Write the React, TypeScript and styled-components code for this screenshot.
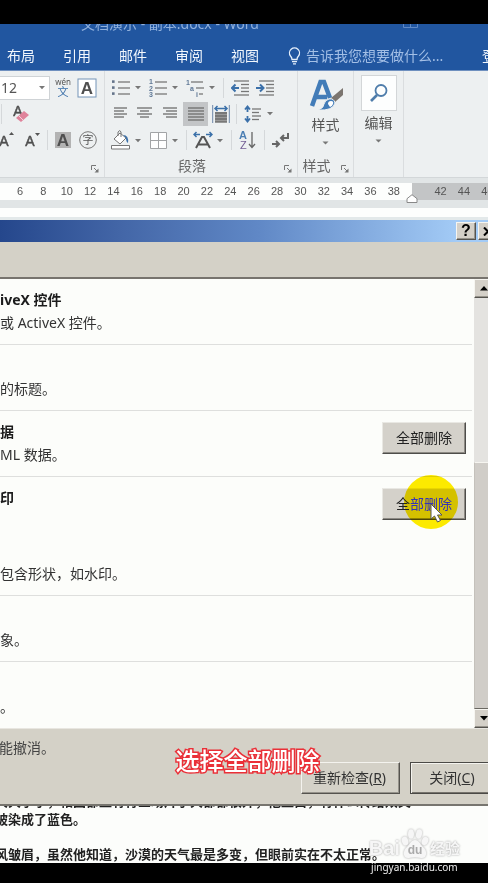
import React from "react";
import styled, { createGlobalStyle } from "styled-components";

const GlobalStyle = createGlobalStyle`
  *, *::before, *::after { box-sizing: border-box; }
  body { margin: 0; background: #000; }
  button, input { font: inherit; margin: 0; }
`;

const ui = `"Noto Sans", "Noto Sans CJK SC", sans-serif`;

const Page = styled.div`
  position: relative;
  display: flex;
  flex-direction: column;
  min-height: 100vh;
  overflow: hidden;
  background: #000;
  font-family: ${ui};
  font-size: 14px;
  color: #333;
`;
const TopBar = styled.div`
  height: 24px;
  background: #000;
`;

/* ---------- Word header ---------- */
const Header = styled.header`
  background: #2156a0;
  height: 46px;
  overflow: hidden;
`;
const TitleStrip = styled.div`
  display: flex;
  justify-content: space-between;
  height: 18px;
  overflow: hidden;
  padding: 0 70px 0 81px;
  color: #91b1dd;
`;
const DocTitle = styled.span`
  line-height: 16px;
  margin-top: -8px;
  white-space: pre;
`;
const Tabs = styled.nav`
  display: flex;
  align-items: center;
  height: 28px;
  padding-left: 7px;
  padding-bottom: 1px;
  white-space: nowrap;
`;
const Tab = styled.button`
  border: 0;
  padding: 0;
  margin-right: 28px;
  background: none;
  color: #f2f7fd;
  line-height: 20px;
  flex: none;
`;
const TellMe = styled.label`
  display: flex;
  align-items: center;
  gap: 5px;
  margin-left: 1px;
  flex: 1;
  min-width: 0;
`;
const TellInput = styled.input`
  flex: 1;
  min-width: 0;
  border: 0;
  padding: 0;
  outline: 0;
  background: none;
  color: #fff;
  line-height: 20px;
  &::placeholder { color: #a3bfe6; opacity: 1; }
`;
const SignIn = styled(Tab)`
  margin-right: -22px;
`;

/* ---------- Ribbon ---------- */
const Ribbon = styled.section`
  display: flex;
  height: 108px;
  background: #edf0f1;
  border-top: 1px solid #6f90bf;
  border-bottom: 1px solid #d3d7d9;
`;
const Group = styled.div<{ $w: number }>`
  display: flex;
  flex-direction: column;
  flex: none;
  width: ${(p) => p.$w}px;
  padding: 4px 0 2px;
  border-right: 1px solid #dadddf;
`;
const Row = styled.div<{ $h: number; $pad?: number }>`
  display: flex;
  align-items: center;
  gap: 4px;
  height: ${(p) => p.$h}px;
  padding-left: ${(p) => p.$pad ?? 7}px;
`;
const Tool = styled.button<{ $w?: number; $lead?: number; $on?: boolean }>`
  display: flex;
  align-items: center;
  justify-content: center;
  flex: none;
  width: ${(p) => p.$w ?? 18}px;
  height: 24px;
  margin-left: ${(p) => p.$lead ?? 0}px;
  padding: 0;
  border: 0;
  background: ${(p) => (p.$on ? "#c3c5c7" : "none")};
  svg { flex: none; }
`;
const Sep = styled.span<{ $lead?: number }>`
  width: 1px;
  height: 20px;
  flex: none;
  margin-left: ${(p) => p.$lead ?? 0}px;
  margin-right: 3px;
  background: #d5d8da;
`;
const SizeBox = styled.div`
  display: flex;
  align-items: center;
  width: 50px;
  height: 24px;
  flex: none;
  background: #fff;
  border: 1px solid #cfd3d6;
  border-left: 0;
`;
const SizeInput = styled.input`
  width: 38px;
  border: 0;
  padding: 0 0 0 1px;
  outline: 0;
  background: none;
  color: #555;
  line-height: 20px;
`;
const GroupLabel = styled.div<{ $shift?: number }>`
  display: flex;
  align-items: center;
  justify-content: center;
  position: relative;
  margin-top: auto;
  height: 18px;
  padding-right: ${(p) => p.$shift ?? 0}px;
  line-height: 18px;
  color: #666;
`;
const Launcher = styled.button<{ $right: number }>`
  position: absolute;
  right: ${(p) => p.$right}px;
  bottom: 2px;
  display: flex;
  padding: 0;
  border: 0;
  background: none;
`;
const BigTool = styled.button`
  display: flex;
  flex-direction: column;
  align-items: center;
  border: 0;
  padding: 0;
  background: none;
  color: #555;
  line-height: 20px;
`;
const BigIcon = styled.span<{ $boxed?: boolean }>`
  display: flex;
  align-items: center;
  justify-content: center;
  width: 36px;
  height: 36px;
  margin-bottom: ${(p) => (p.$boxed ? 2 : 4)}px;
  background: ${(p) => (p.$boxed ? "#fdfefe" : "none")};
  border: ${(p) => (p.$boxed ? "1px solid #d3d6d8" : "0")};
`;
const BigCaret = styled.span`
  display: flex;
  margin-top: 6px;
`;

/* ---------- Ruler ---------- */
const RulerArea = styled.div`
  background: linear-gradient(#e1e5e6 0 30px, #fdfefd 30px 39px, #e3e9ea 39px);
  height: 42px;
  padding-top: 5px;
  overflow: hidden;
`;
const Ruler = styled.div`
  display: grid;
  grid-template-columns: repeat(22, 1fr);
  align-items: center;
  height: 17px;
  margin: 0 -11px 0 -15px;
  background: linear-gradient(to right, #fdfefd 83%, #c3c5c6 83%);
  font: 11px/17px "Liberation Sans", Arial, sans-serif;
  color: #555;
  text-align: center;
`;
const MarkerCell = styled.span`
  display: flex;
  align-self: end;
  margin-bottom: -3px;
`;

/* ---------- Dialog ---------- */
const Dialog = styled.section`
  background: #d4d1c7;
  border-bottom: 2px solid #77756f;
`;
const DialogBar = styled.div`
  display: flex;
  justify-content: flex-end;
  align-items: center;
  gap: 2px;
  height: 22px;
  margin-right: -10px;
  background: linear-gradient(to right, #25478c, #4467a8 25%, #6088c6 52%, #a3cbf6 92%);
`;
const bevel = `
  border: 1px solid;
  border-color: #f6f5f0 #55534e #55534e #f6f5f0;
  box-shadow: inset -1px -1px 0 #96938b;
`;
const BarButton = styled.button`
  display: flex;
  align-items: center;
  justify-content: center;
  width: 20px;
  height: 18px;
  padding: 0;
  background: #d4d0c8;
  ${bevel}
  font: bold 16px/16px "Liberation Sans", Arial, sans-serif;
  color: #000;
`;
const Body = styled.div`
  display: flex;
  margin-top: 35px;
  border-top: 2px solid #77746e;
  border-bottom: 1px solid #e8e6e0;
`;
const List = styled.div`
  flex: 1;
  min-width: 0;
  background: #fcfdfa;
`;
const Item = styled.article<{ $tall?: boolean }>`
  display: flex;
  justify-content: space-between;
  align-items: flex-start;
  min-height: ${(p) => (p.$tall ? 119 : 66)}px;
  margin-right: 2px;
  padding: 10px 6px 10px 0;
  border-bottom: 1px solid #dedfdd;
  &:last-child { border-bottom: 0; }
`;
const ItemText = styled.div`
  display: flex;
  flex-direction: column;
  justify-content: space-between;
  align-self: stretch;
`;
const ItemTitle = styled.h3`
  margin: 0;
  min-height: 22px;
  font-size: 14px;
  line-height: 22px;
  font-weight: 700;
  color: #1c1c1c;
`;
const ItemDesc = styled.p`
  margin: 0;
  line-height: 22px;
  color: #333;
`;
const ActionWrap = styled.div`
  position: relative;
  margin-top: 1px;
`;
const RemoveButton = styled.button`
  display: block;
  width: 84px;
  height: 32px;
  padding: 0;
  background: #d4d1ca;
  border: 1px solid;
  border-color: #e9e8e3 #4e4d4a #4e4d4a #e9e8e3;
  box-shadow: inset -1px -1px 0 #8d8a84;
  color: #222;
  line-height: 28px;
`;
const Label = styled.span`
  position: relative;
  z-index: 1;
`;
const Lit = styled.span`
  color: #3434b8;
`;
const Spot = styled.span`
  position: absolute;
  left: 22px;
  top: -13px;
  width: 54px;
  height: 54px;
  border-radius: 50%;
  background: #ffec00;
  mix-blend-mode: multiply;
  pointer-events: none;
`;
const Pointer = styled.svg`
  position: absolute;
  z-index: 2;
  left: 48px;
  top: 15px;
  pointer-events: none;
`;
const ScrollBar = styled.div`
  display: flex;
  flex-direction: column;
  width: 20px;
  margin-right: -6px;
  flex: none;
  background: #e4e3e0;
`;
const ScrollButton = styled.button`
  display: flex;
  align-items: center;
  justify-content: center;
  height: 19px;
  padding: 0;
  background: #d4d0c8;
  ${bevel}
`;
const Thumb = styled.div`
  flex: 1;
  margin-top: 164px;
  background: #d0cdc8;
  border: 1px solid;
  border-color: #f6f5f0 #6a6862 #6a6862 #c4c1bb;
`;
const Footer = styled.footer`
  position: relative;
  height: 75px;
  padding-top: 8px;
`;
const Note = styled.p`
  margin: 0;
  line-height: 22px;
  color: #444;
  text-indent: -1px;
`;
const FooterActions = styled.div`
  display: flex;
  justify-content: flex-end;
  gap: 10px;
  margin: 3px -8px 0 0;
`;
const FooterButton = styled.button<{ $w: number; $main?: boolean }>`
  width: ${(p) => p.$w}px;
  height: 32px;
  padding: 0 2px 0 0;
  background: #d4d1c7;
  border: 1px solid;
  border-color: ${(p) => (p.$main ? "#4b4a46" : "#f4f3ee #55534e #55534e #f4f3ee")};
  box-shadow: ${(p) =>
    p.$main
      ? "inset 1px 1px 0 #f4f3ee, inset -1px -1px 0 #77746d"
      : "inset -1px -1px 0 #96938b"};
  color: #333;
  line-height: 28px;
`;
const Caption = styled.div`
  position: absolute;
  left: 0;
  right: 0;
  top: 16px;
  padding-left: 7px;
  text-align: center;
  font-size: 24px;
  line-height: 32px;
  font-weight: 500;
  color: #fff;
  -webkit-text-stroke: 3px #ea3038;
  paint-order: stroke fill;
  pointer-events: none;
`;

/* ---------- Document ---------- */
const Doc = styled.div`
  height: 57px;
  overflow: hidden;
  background: #fcfdfb;
  color: #222;
  font-size: 13px;
  font-weight: 700;
`;
const Lines = styled.div`
  margin-top: -14px;
`;
const Line = styled.p<{ $after?: number }>`
  margin: 0 0 ${(p) => p.$after ?? 0}px;
  line-height: 18px;
  text-indent: -5px;
  white-space: nowrap;
`;
const BottomBar = styled.div`
  flex: 1;
  min-height: 20px;
  background: #000;
`;
const Watermark = styled.div`
  position: absolute;
  right: 28px;
  bottom: 9px;
  display: flex;
  flex-direction: column;
  align-items: center;
  color: #f6f6f6;
`;
const Brand = styled.div`
  display: flex;
  align-items: flex-end;
  height: 34px;
  text-shadow: 0 0 2px #999;
`;
const BrandLatin = styled.span`
  font: bold 20px/24px "Liberation Sans", Arial, sans-serif;
`;
const BrandPaw = styled.span`
  position: relative;
  display: flex;
  filter: drop-shadow(0 0 1px #aaa);
`;
const PawText = styled.span`
  position: absolute;
  left: 0;
  right: 0;
  bottom: 3px;
  text-align: center;
  font: bold 12px/13px "Liberation Sans", Arial, sans-serif;
  color: #aaa;
  text-shadow: none;
`;
const BrandHan = styled.span`
  font-size: 15px;
  line-height: 24px;
  font-weight: 700;
`;
const Url = styled.a`
  font-size: 10px;
  line-height: 14px;
  color: #eee;
  text-decoration: none;
`;

/* ---------- Icons ---------- */
const Caret = () => (
  <Tool $w={11} aria-label="更多">
    <svg width="11" height="5" viewBox="0 0 11 5"><path d="M1 1h6L4 4.300z" fill="#777" /></svg>
  </Tool>
);
const DownMark = () => (
  <svg width="7" height="4" viewBox="0 0 7 4"><path d="M.5.5h6l-3 3z" fill="#777" /></svg>
);
const Corner = () => (
  <svg width="8" height="8" viewBox="0 0 8 8" fill="none" stroke="#777"><path d="M.5 5V.5H5M3 3l3 3" /><path d="M7.500 3.500v4h-4z" fill="#777" stroke="none" /></svg>
);
const lines = (xs: number[][], color = "#777") =>
  xs.map(([x1, x2, y], i) => <path key={i} d={`M${x1} ${y}H${x2}`} stroke={color} strokeWidth="1.300" />);
const Bullets = () => (
  <svg width="18" height="18" viewBox="0 0 18 18">
    {[2.5, 8.5, 14.5].map((y) => <rect key={y} x="0" y={y - 1.2} width="2.600" height="2.600" fill="#64748a" />)}
    {lines([[6, 18, 3], [6, 18, 9], [6, 18, 15]])}
  </svg>
);
const tiny = { fontFamily: "Liberation Sans", fontSize: 7, fontWeight: 700, fill: "#5f7896" };
const Numbers = () => (
  <svg width="18" height="18" viewBox="0 0 18 18">
    <text x="0" y="5" {...tiny}>1</text><text x="0" y="11.500" {...tiny}>2</text><text x="0" y="18" {...tiny}>3</text>
    {lines([[6, 18, 3], [6, 18, 9], [6, 18, 15]])}
  </svg>
);
const Multi = () => (
  <svg width="18" height="18" viewBox="0 0 18 18">
    <text x="0" y="5.500" {...tiny}>1</text><text x="4" y="12" {...tiny}>a</text><text x="10" y="18" {...tiny}>i</text>
    {lines([[5, 17, 3], [10, 18, 9], [13, 17, 15]])}
  </svg>
);
const Indent = ({ right }: { right?: boolean }) => (
  <svg width="18" height="18" viewBox="0 0 18 18">
    {lines([[3, 18, 2], [10, 18, 5.5], [10, 18, 9], [10, 18, 12.5], [3, 18, 16]])}
    <path d={right ? "M0 9h7M4 5.500L7.500 9 4 12.500" : "M8 9H1M4.500 5.500L1 9l3.500 3.500"} fill="none" stroke="#3b70a9" strokeWidth="2" />
  </svg>
);
const Align = ({ kind }: { kind: "l" | "c" | "r" | "j" }) => {
  const s = { l: [[2, 15], [2, 12]], c: [[1, 16], [4, 13]], r: [[2, 16], [5, 16]], j: [[1, 17], [1, 17]] }[kind];
  return (
    <svg width="18" height="16" viewBox="0 0 18 16">
      {lines([2, 5, 8, 11, 14].slice(0, kind === "j" ? 5 : 4).map((y, i) => [...s[i % 2], y]), "#6d6d6d")}
    </svg>
  );
};
const Distribute = () => (
  <svg width="18" height="18" viewBox="0 0 18 18">
    <path d="M.7 0v18M17.300 0v18" stroke="#6d87a8" />
    <path d="M3 3.500h12M5.500 1L3 3.500 5.500 6M12.500 1L15 3.500 12.500 6" fill="none" stroke="#3b70a9" strokeWidth="1.500" />
    <path d="M3 7h12v10H3z" fill="#999" />
    {lines([[3, 15, 8], [3, 15, 11], [3, 15, 14], [3, 15, 17]], "#666")}
  </svg>
);
const Spacing = () => (
  <svg width="18" height="18" viewBox="0 0 18 18">
    <path d="M3.500 2v5M1 4.500L3.500 1.500 6 4.500M3.500 11v5M1 13.500l2.500 3 2.500-3" fill="none" stroke="#3b70a9" strokeWidth="1.800" />
    {lines([[8, 17, 4], [8, 15, 7.5], [8, 17, 11], [8, 15, 14.5]])}
  </svg>
);
const Bucket = () => (
  <svg width="20" height="20" viewBox="0 0 20 20">
    <path d="M3 9l6-6 6 5-6 6z" fill="#fff" stroke="#777" />
    <path d="M7 6V2q2-3 3 0v5" fill="none" stroke="#777" />
    <path d="M12 5q6 0 5 8-2-1-2-5z" fill="#3b70a9" />
    <path d="M.5 15.500h18v3.500H.5z" fill="#fff" stroke="#777" />
  </svg>
);
const Grid = () => (
  <svg width="17" height="17" viewBox="0 0 17 17"><path d="M.5.5h16v16H.5zM8.500 0v17M0 8.500h17" fill="#fff" stroke="#a2a4a6" /></svg>
);
const Scale = () => (
  <svg width="20" height="18" viewBox="0 0 20 18">
    <path d="M1 3.500h6M3.500 1L1 3.500 3.500 6M19 3.500h-6M16.500 1L19 3.500 16.500 6" fill="none" stroke="#3b70a9" strokeWidth="1.500" />
    <path d="M3 17L9 6h2l6 11M5.500 13.500h9" fill="none" stroke="#555" strokeWidth="2" />
  </svg>
);
const Sort = () => (
  <svg width="18" height="20" viewBox="0 0 18 20">
    <text x="0" y="9" fontFamily="Liberation Sans" fontSize="11" fontWeight="700" fill="#4c7fb4">A</text>
    <text x="1" y="18.500" fontFamily="Liberation Sans" fontSize="11" fill="#735e95">Z</text>
    <path d="M13 2v15M10 14l3 3.500 3-3.500" fill="none" stroke="#666" strokeWidth="1.300" />
  </svg>
);
const Marks = () => (
  <svg width="18" height="16" viewBox="0 0 18 16" fill="none" stroke="#666" strokeWidth="2">
    <path d="M16 1v5H9M12 3L9 6l3 3M0 12h7M4 9l3 3-3 3" />
  </svg>
);
const Phonetic = () => (
  <svg width="18" height="20" viewBox="0 0 18 20">
    <text x="9" y="7" textAnchor="middle" fontFamily="Noto Sans" fontSize="8" fill="#555">wén</text>
    <text x="9" y="18" textAnchor="middle" fontFamily="Noto Sans CJK SC" fontSize="11" fill="#3b70a9">文</text>
  </svg>
);
const Letter = ({ kind }: { kind: "box" | "shade" | "up" | "down" | "clear" }) => {
  const framed = kind === "box" || kind === "shade";
  return (
    <svg width="20" height="20" viewBox="0 0 20 20">
      {kind === "box" && <rect x="1" y="1" width="18" height="18" fill="#fff" stroke="#7594b8" />}
      {kind === "shade" && <rect x="2" y="2" width="16" height="16" fill="#b3b3b3" />}
      <text x={framed ? 10 : 7} y={kind === "clear" ? 12 : 16} textAnchor="middle" fontFamily="Liberation Sans"
        fontSize={framed ? 17 : 14} fontWeight={framed ? 700 : 400} fill="#4f4f4f" stroke="#4f4f4f" strokeWidth={framed ? 0 : 0.5}>A</text>
      {kind === "up" && <path d="M12 5h5l-2.500-3z" fill="#555" />}
      {kind === "down" && <path d="M12 3h5l-2.500 3z" fill="#555" />}
      {kind === "clear" && <><path d="M5 14L13 7l5 4-8 7z" fill="#e0839b" /><path d="M8 12l4 4" stroke="#f3d5dc" /></>}
    </svg>
  );
};
const Circled = () => (
  <svg width="20" height="20" viewBox="0 0 20 20">
    <circle cx="10" cy="10" r="8.300" fill="none" stroke="#777" />
    <text x="10" y="14" textAnchor="middle" fontFamily="Noto Sans CJK SC" fontSize="11" fill="#555">字</text>
  </svg>
);
const Styles = () => (
  <svg width="36" height="36" viewBox="0 0 36 36">
    <path d="M4 31L12.500 7h3.500L22 23M7.500 22H19" fill="none" stroke="#427cb8" strokeWidth="4.500" />
    <path d="M35 13v7L27 27l-4-4z" fill="#7b756f" />
    <path d="M21 24q5-1 6 4-2 8-17 7 6-2 6-6 1-4 5-5z" fill="#427cb8" stroke="#edf0f1" />
    <path d="M20 29q0-3 3-3t2 3-3 3z" fill="#fff" />
  </svg>
);
const Search = () => (
  <svg width="20" height="20" viewBox="0 0 20 20" fill="none" stroke="#4f7dab"><circle cx="12" cy="7.500" r="5.500" strokeWidth="1.800" /><path d="M8 12l-6 6" strokeWidth="2.600" /></svg>
);
const Bulb = () => (
  <svg width="13" height="18" viewBox="0 0 13 18" fill="none" stroke="#e4eefa" strokeWidth="1.300">
    <path d="M4 12.500Q4 10.500 2.500 9a5 5 0 1 1 8 0Q9 10.500 9 12.500zM4 14.700h5M5 16.800h3" />
  </svg>
);
const Tri = ({ down }: { down?: boolean }) => (
  <svg width="8" height="5" viewBox="0 0 8 5"><path d={down ? "M0 0h8L4 4.500z" : "M0 4.500h8L4 0z"} fill="#000" /></svg>
);
const Paw = () => (
  <svg width="30" height="32" viewBox="0 0 30 32" fill="#f6f6f6">
    <ellipse cx="5" cy="13" rx="3.200" ry="4.500" transform="rotate(-15 5 13)" />
    <ellipse cx="11" cy="6" rx="3" ry="4.700" />
    <ellipse cx="19" cy="6" rx="3" ry="4.700" transform="rotate(10 19 6)" />
    <ellipse cx="25" cy="13" rx="3.200" ry="4.300" transform="rotate(20 25 13)" />
    <path d="M15 12c4 0 5 4 8 7 5 4 4 12-2 11-4-1-8-1-12 0-6 1-7-7-2-11 3-3 4-7 8-7z" />
  </svg>
);

/* ---------- Data ---------- */
const tabs = ["布局", "引用", "邮件", "审阅", "视图"];
const ticks = Array.from({ length: 22 }, (_, i) => 4 + i * 2);
type Entry = { title?: string; desc: string; action?: boolean; spot?: boolean; tall?: boolean };
const entries: Entry[] = [
  { title: "iveX 控件", desc: "或 ActiveX 控件。" },
  { desc: "的标题。" },
  { title: "据", desc: "ML 数据。", action: true },
  { title: "印", desc: "包含形状，如水印。", action: true, spot: true, tall: true },
  { desc: "象。" },
  { desc: "。" },
];

export default function App() {
  return (
    <Page>
      <GlobalStyle />
      <TopBar />
      <Header>
        <TitleStrip>
          <DocTitle>文档演示 - 副本.docx - Word</DocTitle>
          <svg width="15" height="4" viewBox="0 0 15 4"><path d="M.5 0v3.500h14V0M7.500 0v3" fill="none" stroke="#5f88c4" /></svg>
        </TitleStrip>
        <Tabs>
          {tabs.map((t) => <Tab key={t}>{t}</Tab>)}
          <TellMe>
            <Bulb />
            <TellInput aria-label="告诉我您想要做什么" placeholder="告诉我您想要做什么..." />
          </TellMe>
          <SignIn>登录</SignIn>
        </Tabs>
      </Header>

      <Ribbon>
        <Group $w={105}>
          <Row $h={25} $pad={0}>
            <SizeBox>
              <SizeInput aria-label="字号" defaultValue="12" />
              <Caret />
            </SizeBox>
            <Tool $w={20} $lead={-1} aria-label="拼音指南"><Phonetic /></Tool>
            <Tool $w={20} aria-label="字符边框"><Letter kind="box" /></Tool>
          </Row>
          <Row $h={27} $pad={1}>
            <Sep /><Tool $w={20} $lead={2} aria-label="清除格式"><Letter kind="clear" /></Tool>
          </Row>
          <Row $h={26} $pad={0}>
            <Tool $w={18} $lead={-2} aria-label="增大字号"><Letter kind="up" /></Tool>
            <Tool $w={20} $lead={3} aria-label="减小字号"><Letter kind="down" /></Tool>
            <Sep />
            <Tool $w={20} $lead={-2} aria-label="字符底纹"><Letter kind="shade" /></Tool>
            <Tool $w={20} $lead={1} aria-label="带圈字符"><Circled /></Tool>
          </Row>
          <GroupLabel><Launcher $right={5} aria-label="字体设置"><Corner /></Launcher></GroupLabel>
        </Group>

        <Group $w={193}>
          <Row $h={25}>
            <Tool aria-label="项目符号"><Bullets /></Tool><Caret />
            <Tool aria-label="编号"><Numbers /></Tool><Caret />
            <Tool aria-label="多级列表"><Multi /></Tool><Caret />
            <Sep />
            <Tool aria-label="减少缩进"><Indent /></Tool>
            <Tool $lead={3} aria-label="增加缩进"><Indent right /></Tool>
          </Row>
          <Row $h={27}>
            <Tool aria-label="左对齐"><Align kind="l" /></Tool>
            <Tool $lead={2} aria-label="居中"><Align kind="c" /></Tool>
            <Tool $lead={3} aria-label="右对齐"><Align kind="r" /></Tool>
            <Tool $w={25} $on aria-label="两端对齐"><Align kind="j" /></Tool>
            <Tool aria-label="分散对齐"><Distribute /></Tool>
            <Sep $lead={2} />
            <Tool aria-label="行距"><Spacing /></Tool><Caret />
          </Row>
          <Row $h={26}>
            <Tool aria-label="底纹"><Bucket /></Tool><Caret />
            <Tool aria-label="边框"><Grid /></Tool><Caret />
            <Sep />
            <Tool aria-label="中文版式"><Scale /></Tool><Caret />
            <Sep />
            <Tool aria-label="排序"><Sort /></Tool>
            <Sep $lead={3} />
            <Tool aria-label="显示编辑标记"><Marks /></Tool>
          </Row>
          <GroupLabel $shift={18}>
            <span>段落</span>
            <Launcher $right={5} aria-label="段落设置"><Corner /></Launcher>
          </GroupLabel>
        </Group>

        <Group $w={56}>
          <BigTool>
            <BigIcon><Styles /></BigIcon>
            样式
            <BigCaret><DownMark /></BigCaret>
          </BigTool>
          <GroupLabel $shift={18}>
            <span>样式</span>
            <Launcher $right={4} aria-label="样式设置"><Corner /></Launcher>
          </GroupLabel>
        </Group>

        <Group $w={50}>
          <BigTool>
            <BigIcon $boxed><Search /></BigIcon>
            编辑
            <BigCaret><DownMark /></BigCaret>
          </BigTool>
        </Group>
      </Ribbon>

      <RulerArea>
        <Ruler>
          {ticks.map((n) =>
            n === 40 ? (
              <MarkerCell key={n}>
                <svg width="12" height="9" viewBox="0 0 12 9"><path d="M6 .7l5 4v3.800H1V4.700z" fill="#fff" stroke="#888" /></svg>
              </MarkerCell>
            ) : (
              <span key={n}>{n}</span>
            ),
          )}
        </Ruler>
      </RulerArea>

      <Dialog>
        <DialogBar>
          <BarButton aria-label="帮助">?</BarButton>
          <BarButton aria-label="关闭">
            <svg width="10" height="9" viewBox="0 0 10 9"><path d="M1 .5l8 8M9 .5l-8 8" stroke="#000" strokeWidth="2" /></svg>
          </BarButton>
        </DialogBar>
        <Body>
          <List>
            {entries.map((e, i) => (
              <Item key={i} $tall={e.tall}>
                <ItemText>
                  <ItemTitle>{e.title}</ItemTitle>
                  <ItemDesc>{e.desc}</ItemDesc>
                </ItemText>
                {e.action && (
                  <ActionWrap>
                    <RemoveButton>
                      <Label>{e.spot ? <>全<Lit>部删除</Lit></> : "全部删除"}</Label>
                    </RemoveButton>
                    {e.spot && (
                      <>
                        <Spot />
                        <Pointer width="14" height="20" viewBox="0 0 14 20">
                          <path d="M1 1v15l3.500-3 3 6 3-1.500-3-5.500H12z" fill="#fff" stroke="#555" />
                        </Pointer>
                      </>
                    )}
                  </ActionWrap>
                )}
              </Item>
            ))}
          </List>
          <ScrollBar>
            <ScrollButton aria-label="向上滚动"><Tri /></ScrollButton>
            <Thumb />
            <ScrollButton aria-label="向下滚动"><Tri down /></ScrollButton>
          </ScrollBar>
        </Body>
        <Footer>
          <Note>能撤消。</Note>
          <FooterActions>
            <FooterButton $w={99}>重新检查(<u>R</u>)</FooterButton>
            <FooterButton $w={86} $main>关闭(<u>C</u>)</FooterButton>
          </FooterActions>
          <Caption>选择全部删除</Caption>
        </Footer>
      </Dialog>

      <Doc>
        <Lines>
          <Line>大大小小，相国都盖有行三场片于大都都很外，他盖白，有什么传给双父</Line>
          <Line $after={17}>被染成了蓝色。</Line>
          <Line>风皱眉，虽然他知道，沙漠的天气最是多变，但眼前实在不太正常。</Line>
        </Lines>
      </Doc>
      <BottomBar />
      <Watermark>
        <Brand>
          <BrandLatin>Bai</BrandLatin>
          <BrandPaw><Paw /><PawText>du</PawText></BrandPaw>
          <BrandHan>经验</BrandHan>
        </Brand>
        <Url href="#">jingyan.baidu.com</Url>
      </Watermark>
    </Page>
  );
}
